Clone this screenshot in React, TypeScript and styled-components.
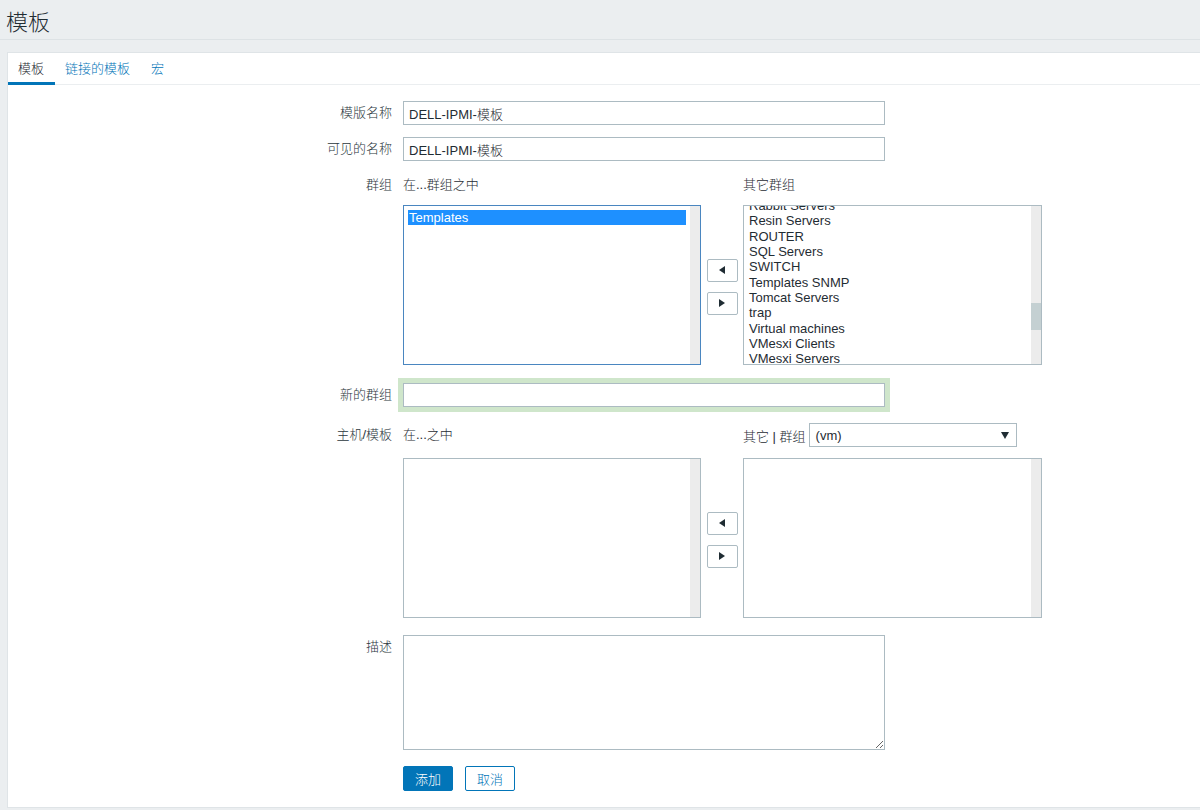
import React from 'react';
import styled, { createGlobalStyle } from 'styled-components';

const GlobalStyle = createGlobalStyle`
    html, body {
        margin: 0;
        padding: 0;
        background: #ebeef0;
    }
    body {
        font-family: "Liberation Sans", Arial, "Noto Sans CJK SC", sans-serif;
        font-size: 13px;
        font-weight: 300;
        color: #1f2c33;
    }
`;

const otherGroups = [
    'Rabbit Servers',
    'Resin Servers',
    'ROUTER',
    'SQL Servers',
    'SWITCH',
    'Templates SNMP',
    'Tomcat Servers',
    'trap',
    'Virtual machines',
    'VMesxi Clients',
    'VMesxi Servers',
];

const ArrowIcon = ({ dir }: { dir: 'left' | 'right' }) => (
    <svg width="6" height="8" viewBox="0 0 6 8">
        {dir === 'left' ? <polygon points="6,0 6,8 0,4" fill="#1f2c33" /> : <polygon points="0,0 0,8 6,4" fill="#1f2c33" />}
    </svg>
);

const MoveButtons = () => (
    <ButtonStack>
        <MoveButton>
            <ArrowIcon dir="left" />
        </MoveButton>
        <MoveButton>
            <ArrowIcon dir="right" />
        </MoveButton>
    </ButtonStack>
);

const App = () => {
    return (
        <Page>
            <GlobalStyle />
            <Header>
                <Title>模板</Title>
            </Header>
            <Card>
                <TabBar>
                    <Tab $active>模板</Tab>
                    <Tab>链接的模板</Tab>
                    <Tab>宏</Tab>
                </TabBar>
                <Form onSubmit={(e) => e.preventDefault()}>
                    <Row>
                        <Label>模版名称</Label>
                        <TextInput defaultValue="DELL-IPMI-模板" />
                    </Row>
                    <Row $gap={12}>
                        <Label>可见的名称</Label>
                        <TextInput defaultValue="DELL-IPMI-模板" />
                    </Row>
                    <Row $gap={12}>
                        <Label>群组</Label>
                        <TwinList $headGap={8}>
                            <ListHead>在...群组之中</ListHead>
                            <span />
                            <ListHead>其它群组</ListHead>
                            <ListBox $focused>
                                <ListBody>
                                    <Option $selected>Templates</Option>
                                </ListBody>
                                <Track />
                            </ListBox>
                            <MoveButtons />
                            <ListBox>
                                <ListBody>
                                    <Options $shift={8}>
                                        {otherGroups.map((g) => (
                                            <Option key={g}>{g}</Option>
                                        ))}
                                    </Options>
                                </ListBody>
                                <Track>
                                    <Thumb $top={97} $height={27} />
                                </Track>
                            </ListBox>
                        </TwinList>
                    </Row>
                    <Row $gap={18}>
                        <Label>新的群组</Label>
                        <TextInput $highlight />
                    </Row>
                    <Row $gap={16}>
                        <Label>主机/模板</Label>
                        <TwinList $headGap={11}>
                            <ListHead>在...之中</ListHead>
                            <span />
                            <FilterHead>
                                其它 | 群组
                                <FakeSelect>
                                    (vm)
                                    <svg width="8" height="7" viewBox="0 0 8 7">
                                        <polygon points="0,0 8,0 4,7" fill="#1f2c33" />
                                    </svg>
                                </FakeSelect>
                            </FilterHead>
                            <ListBox>
                                <ListBody />
                                <Track />
                            </ListBox>
                            <MoveButtons />
                            <ListBox>
                                <ListBody />
                                <Track />
                            </ListBox>
                        </TwinList>
                    </Row>
                    <Row $gap={17}>
                        <Label>描述</Label>
                        <TextArea />
                    </Row>
                    <Row $gap={16}>
                        <span />
                        <Actions>
                            <PrimaryButton>添加</PrimaryButton>
                            <SecondaryButton>取消</SecondaryButton>
                        </Actions>
                    </Row>
                </Form>
            </Card>
        </Page>
    );
};

const Page = styled.div`
    height: 810px;
    overflow: hidden;
`;

const Header = styled.div`
    height: 39px;
    border-bottom: 1px solid #dde2e5;
    padding-left: 6px;
    display: flex;
    align-items: center;
`;

const Title = styled.h1`
    margin: 0;
    font-size: 22px;
    font-weight: 300;
    color: #1f2c33;
`;

const Card = styled.div`
    margin: 12px 0 0 7px;
    background: #fff;
    border: 1px solid #dfe4e7;
    border-right: none;
`;

const TabBar = styled.div`
    display: flex;
    height: 31px;
    border-bottom: 1px solid #ebeef0;
`;

const Tab = styled.div<{ $active?: boolean }>`
    display: flex;
    align-items: center;
    padding: 0 11px 0 10px;
    margin-bottom: -1px;
    border-bottom: 3px solid ${(p) => (p.$active ? '#0275b8' : 'transparent')};
    color: ${(p) => (p.$active ? '#1f2c33' : '#0275b8')};
    cursor: pointer;
`;

const Form = styled.form`
    padding: 16px 0 16px;
`;

const Row = styled.div<{ $gap?: number }>`
    display: grid;
    grid-template-columns: 384px 1fr;
    column-gap: 11px;
    margin-top: ${(p) => p.$gap ?? 0}px;
`;

const Label = styled.div`
    text-align: right;
    line-height: 24px;
    color: #2b373d;
`;

const TextInput = styled.input<{ $highlight?: boolean }>`
    box-sizing: border-box;
    width: 482px;
    height: 24px;
    margin: 0;
    padding: 0 5px;
    border: 1px solid #acbbc2;
    border-radius: 0;
    font-family: inherit;
    font-size: 13px;
    font-weight: 300;
    color: #1f2c33;
    outline: none;
    box-shadow: ${(p) => (p.$highlight ? '0 0 0 5px #cfe6cb' : 'none')};
`;

const TwinList = styled.div<{ $headGap: number }>`
    display: grid;
    grid-template-columns: 298px 42px 299px;
    grid-template-rows: 24px 160px;
    row-gap: ${(p) => p.$headGap}px;
`;

const ListHead = styled.div`
    line-height: 24px;
`;

const FilterHead = styled.div`
    display: flex;
    align-items: center;
    gap: 3px;
    white-space: nowrap;
`;

const FakeSelect = styled.div`
    box-sizing: border-box;
    width: 208px;
    height: 24px;
    border: 1px solid #acbbc2;
    display: flex;
    align-items: center;
    justify-content: space-between;
    padding: 0 7px 0 6px;
    background: #fff;
`;

const ListBox = styled.div<{ $focused?: boolean }>`
    box-sizing: border-box;
    height: 160px;
    border: 1px solid ${(p) => (p.$focused ? '#4a86c0' : '#acbbc2')};
    display: flex;
    overflow: hidden;
    background: #fff;
`;

const ListBody = styled.div`
    flex: 1;
    overflow: hidden;
    padding: 4px;
`;

const Options = styled.div<{ $shift?: number }>`
    margin-top: -${(p) => (p.$shift ?? 0) + 4}px;
`;

const Option = styled.div<{ $selected?: boolean }>`
    line-height: 15.35px;
    padding-left: 1px;
    white-space: nowrap;
    background: ${(p) => (p.$selected ? '#1e90ff' : 'transparent')};
    color: ${(p) => (p.$selected ? '#fff' : '#1f2c33')};
`;

const Track = styled.div`
    width: 10px;
    background: #ececec;
    display: flex;
    flex-direction: column;
`;

const Thumb = styled.div<{ $top: number; $height: number }>`
    margin-top: ${(p) => p.$top}px;
    height: ${(p) => p.$height}px;
    background: #c4d0d2;
`;

const ButtonStack = styled.div`
    display: flex;
    flex-direction: column;
    align-items: center;
    justify-content: center;
    gap: 10px;
    padding-top: 3px;
`;

const MoveButton = styled.div`
    box-sizing: border-box;
    width: 31px;
    height: 23px;
    border: 1px solid #acbbc2;
    border-radius: 2px;
    background: #fff;
    display: flex;
    align-items: center;
    justify-content: center;
    cursor: pointer;
`;

const TextArea = styled.textarea`
    box-sizing: border-box;
    width: 482px;
    height: 115px;
    margin: 0;
    padding: 4px 5px;
    border: 1px solid #acbbc2;
    border-radius: 0;
    font-family: inherit;
    font-size: 13px;
    outline: none;
    display: block;
`;

const Actions = styled.div`
    display: flex;
    gap: 12px;
`;

const PrimaryButton = styled.button`
    box-sizing: border-box;
    width: 50px;
    height: 25px;
    border: 1px solid #0275b8;
    border-radius: 2px;
    background: #0275b8;
    color: #fff;
    font-family: inherit;
    font-size: 13px;
    font-weight: 300;
    padding: 0;
    cursor: pointer;
`;

const SecondaryButton = styled(PrimaryButton)`
    background: #fff;
    color: #0275b8;
`;

export default App;
